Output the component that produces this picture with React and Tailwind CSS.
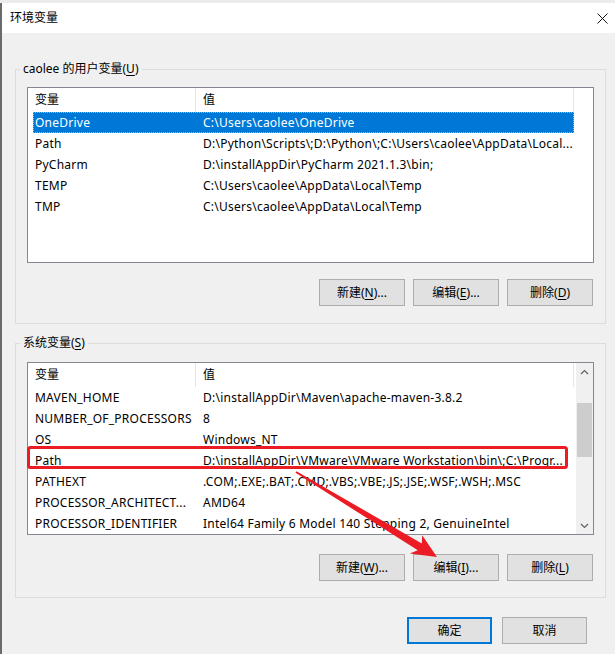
import React from "react";

const userVars = [
  { name: "OneDrive", value: "C:\\Users\\caolee\\OneDrive", selected: true },
  { name: "Path", value: "D:\\Python\\Scripts\\;D:\\Python\\;C:\\Users\\caolee\\AppData\\Local..." },
  { name: "PyCharm", value: "D:\\installAppDir\\PyCharm 2021.1.3\\bin;" },
  { name: "TEMP", value: "C:\\Users\\caolee\\AppData\\Local\\Temp" },
  { name: "TMP", value: "C:\\Users\\caolee\\AppData\\Local\\Temp" },
];

const sysVars = [
  { name: "MAVEN_HOME", value: "D:\\installAppDir\\Maven\\apache-maven-3.8.2" },
  { name: "NUMBER_OF_PROCESSORS", value: "8" },
  { name: "OS", value: "Windows_NT" },
  { name: "Path", value: "D:\\installAppDir\\VMware\\VMware Workstation\\bin\\;C:\\Progr..." },
  { name: "PATHEXT", value: ".COM;.EXE;.BAT;.CMD;.VBS;.VBE;.JS;.JSE;.WSF;.WSH;.MSC" },
  { name: "PROCESSOR_ARCHITECT...", value: "AMD64" },
  { name: "PROCESSOR_IDENTIFIER", value: "Intel64 Family 6 Model 140 Stepping 2, GenuineIntel" },
];

const Key = ({ k }) => <span className="underline underline-offset-[2px]">{k}</span>;

const Button = ({ label, k, tail = "" }) => (
  <button className="w-[86px] h-[27px] border border-[#adadad] bg-[#e1e1e1] text-[12px] text-black flex items-center justify-center leading-none">
    {label}({<Key k={k} />}){tail}
  </button>
);

const Header = () => (
  <div className="flex h-[24px] shrink-0 items-center bg-white">
    <div className="w-[168px] h-full flex items-center pl-[7px] border-r border-[#e5e5e5]">变量</div>
    <div className="w-[378px] h-full flex items-center pl-[7px] border-r border-[#e5e5e5]">值</div>
    <div className="flex-1" />
  </div>
);

const Row = ({ item }) => (
  <div
    className={
      "ml-[5px] w-[541px] h-[21px] shrink-0 flex items-center whitespace-nowrap overflow-hidden tracking-[0.24px] " +
      (item.selected ? "bg-[#0078d7] text-white border border-dotted border-[#f3a64c]" : "text-black")
    }
  >
    <div className={item.selected ? "w-[162px] pl-[1px] overflow-hidden" : "w-[163px] pl-[2px] overflow-hidden"}>{item.name}</div>
    <div className="flex-1 pl-[7px] overflow-hidden">{item.value}</div>
  </div>
);

const Chevron = ({ up }) => (
  <svg width="9" height="6" viewBox="0 0 9 6">
    <polyline
      points={up ? "1,5 4.5,1.5 8,5" : "1,1 4.5,4.5 8,1"}
      fill="none"
      stroke="#606060"
      strokeWidth="1.2"
    />
  </svg>
);

export default function App() {
  return (
    <div
      className="relative w-[615px] h-[654px] overflow-hidden bg-[#f0f0f0] text-[12px] text-black"
      style={{ fontFamily: '"Noto Sans", "Noto Sans CJK SC", sans-serif' }}
    >
      <div className="h-[3px] bg-[#ececec]" />
      <div className="flex h-[651px]">
        <div className="w-[2px] bg-[#6a6a6a]" />
        <div className="flex-1 flex flex-col">
          {/* Title bar */}
          <div className="h-[30px] bg-white flex items-center justify-between pl-[8px] pr-[7px]">
            <span>环境变量</span>
            <svg width="11" height="11" viewBox="0 0 11 11">
              <path d="M0.5 0.5 L10.5 10.5 M10.5 0.5 L0.5 10.5" stroke="#111" strokeWidth="1" />
            </svg>
          </div>

          {/* User variables */}
          <fieldset className="mt-[30px] ml-[13px] mr-[9px] border border-[#dcdcdc]">
            <legend className="ml-[4px] px-[3px] leading-[12px]">
              caolee 的用户变量(<Key k="U" />)
            </legend>
            <div className="mt-[12px] mx-[11px] h-[176px] border border-[#828790] bg-white flex flex-col overflow-hidden">
              <Header />
              {userVars.map((v) => (
                <Row key={v.name} item={v} />
              ))}
            </div>
            <div className="mt-[16px] pb-[17px] pr-[12px] flex justify-end gap-[8px]">
              <Button label="新建" k="N" tail="..." />
              <Button label="编辑" k="E" tail="..." />
              <Button label="删除" k="D" />
            </div>
          </fieldset>

          {/* System variables */}
          <fieldset className="mt-[13px] ml-[13px] mr-[9px] border border-[#dcdcdc]">
            <legend className="ml-[4px] px-[3px] leading-[12px]">
              系统变量(<Key k="S" />)
            </legend>
            <div className="mt-[13px] mx-[11px] h-[173px] border border-[#828790] bg-white flex overflow-hidden">
              <div className="flex-1 flex flex-col overflow-hidden">
                <Header />
                {sysVars.map((v) => (
                  <Row key={v.name} item={v} />
                ))}
              </div>
              <div className="w-[17px] bg-[#f0f0f0] flex flex-col">
                <div className="h-[17px] flex items-center justify-center">
                  <Chevron up />
                </div>
                <div className="flex-1 flex flex-col">
                  <div className="mt-[23px] mx-[1px] h-[54px] bg-[#cdcdcd]" />
                </div>
                <div className="h-[17px] flex items-center justify-center">
                  <Chevron />
                </div>
              </div>
            </div>
            <div className="mt-[19px] pb-[16px] pr-[12px] flex justify-end gap-[8px]">
              <Button label="新建" k="W" tail="..." />
              <Button label="编辑" k="I" tail="..." />
              <Button label="删除" k="L" />
            </div>
          </fieldset>

          {/* OK / Cancel */}
          <div className="mt-[19px] pr-[28px] flex justify-end gap-[10px]">
            <button className="w-[85px] h-[27px] border-2 border-[#0078d7] bg-[#e1e1e1] text-[12px] flex items-center justify-center">
              确定
            </button>
            <button className="w-[85px] h-[27px] border border-[#adadad] bg-[#e1e1e1] text-[12px] flex items-center justify-center">
              取消
            </button>
          </div>
        </div>
      </div>

      {/* Annotation overlay */}
      <svg className="absolute inset-0 pointer-events-none" width="615" height="654" viewBox="0 0 615 654">
        <rect x="28.5" y="447.5" width="538" height="20" rx="2" fill="none" stroke="#ec1c24" strokeWidth="3" />
        <polygon
          points="296.5,471.2 421.8,543.4 422.2,535.2 437,557 409.8,553.4 417.8,550.3 295.5,472.8"
          fill="#ec1c24"
        />
      </svg>
    </div>
  );
}
